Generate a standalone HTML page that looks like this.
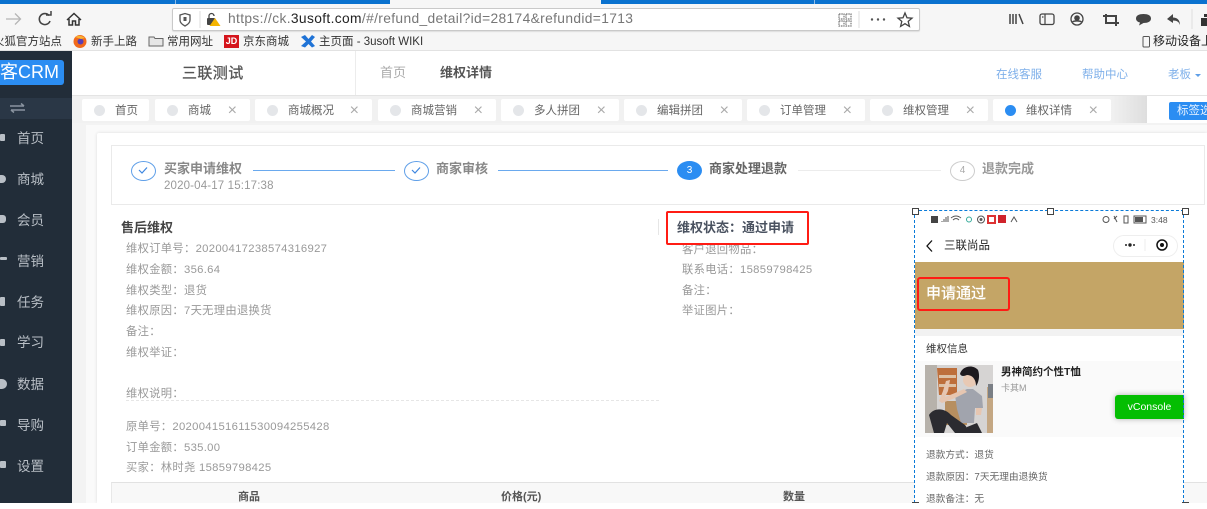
<!DOCTYPE html>
<html><head><meta charset="utf-8">
<style>
html,body{margin:0;padding:0;background:#fff}
#r{position:relative;width:1207px;height:509px;overflow:hidden;background:#fff;font-family:"Liberation Sans","Noto Sans CJK SC",sans-serif}
#r div,#r span.t{position:absolute;white-space:nowrap}
.g{color:#999;font-size:11.300px;line-height:14px;letter-spacing:.3px}
.tab{top:99px;height:22px;background:#fff;border-radius:2px}
.tab i{position:absolute;left:12px;top:6px;width:11px;height:11px;border-radius:50%;background:#e4e6e9}
.tab b{position:absolute;top:5px;font-weight:400;font-size:11.500px;line-height:15px;color:#666}
.tab u{position:absolute;top:4px;right:12px;text-decoration:none;color:#aaa;font-size:16px;line-height:15px}
.m{left:17px;color:#b9bfc6;font-size:13.500px;line-height:16px}
.ic{left:0;width:6px;height:8px;background:#b9bfc6;border-radius:1px}
.bk{font-size:11.500px;line-height:14px;color:#333}
.h{width:5px;height:5px;border:1px solid #444;background:#fff}
.st{font-size:13px;line-height:16px;font-weight:700}
</style></head><body><div id="r">

<!-- browser top -->
<div style="left:0;top:0;width:1207px;height:51px;background:#f6f6f6"></div>
<div style="left:0;top:0;width:390px;height:4px;background:#0a72cf"></div>
<div style="left:175px;top:0;width:1px;height:4px;background:#8fbce6"></div>
<div style="left:601px;top:0;width:606px;height:4px;background:#0a72cf"></div>
<div style="left:814px;top:0;width:1px;height:4px;background:#8fbce6"></div>
<svg style="position:absolute;left:0;top:8px" width="90" height="22" fill="none">
<path d="M6 11H20M15 5.500L20.500 11L15 16.500" stroke="#b5b5b5" stroke-width="1.300"/>
<path d="M49 7.500A5.500 5.500 0 1 0 50 13" stroke="#444" stroke-width="1.600"/><path d="M46 7H51V3" stroke="#444" stroke-width="1.500"/>
<path d="M67 12L74 5.500L81 12M69 11V17H72.500V13H75.500V17H79V11" stroke="#333" stroke-width="1.500"/>
</svg>
<div style="left:172px;top:8px;width:746px;height:21px;background:#fff;border:1px solid #c9c9c9;border-radius:2px;box-shadow:0 1px 1px #ddd"></div>
<svg style="position:absolute;left:176px;top:10px" width="50" height="20" fill="none">
<path d="M4 5L9 3.500L14 5V10C14 13 11 15 9 16C7 15 4 13 4 10Z" stroke="#555" stroke-width="1.300"/><rect x="7.500" y="7" width="3" height="4" fill="#555"/>
<path d="M24 1V18" stroke="#ddd"/>
<rect x="31" y="8" width="8" height="7" fill="#444" rx="1"/><path d="M33 8V6A2.500 2.500 0 0 1 38 6" stroke="#444" stroke-width="1.300"/>
<path d="M39 8L44.500 16H33.500Z" fill="#f5b400"/>
</svg>
<div style="left:228px;top:10px;font-size:13.800px;line-height:17px;letter-spacing:.35px;color:#777">https://ck.<span style="color:#222">3usoft.com</span>/#/refund_detail?id=28174&amp;refundid=1713</div>
<svg style="position:absolute;left:836px;top:10px" width="80" height="20" fill="none">
<path d="M3 4H8V9H3ZM10 4H15V9H10ZM3 11H8V16H3ZM10 11H15V16H10Z" stroke="#777" stroke-width="1.200" stroke-dasharray="1.500 .8"/>
<path d="M23 1V18" stroke="#ddd"/>
<circle cx="36" cy="9.500" r="1.200" fill="#555"/><circle cx="42" cy="9.500" r="1.200" fill="#555"/><circle cx="48" cy="9.500" r="1.200" fill="#555"/>
<path d="M69 3L71 7.800L76 8.200L72.200 11.400L73.400 16.400L69 13.700L64.600 16.400L65.800 11.400L62 8.200L67 7.800Z" stroke="#444" stroke-width="1.300"/>
</svg>
<svg style="position:absolute;left:1005px;top:9px" width="202" height="22" fill="none" stroke="#444">
<path d="M5 5V15M8 5V15M11 5V15M14 5L18 15" stroke-width="1.500"/>
<rect x="35" y="5" width="14" height="10.500" rx="2" stroke-width="1.300"/><path d="M40 5V15.500M37 8H38.500" stroke-width="1.200"/>
<circle cx="72" cy="10" r="6" stroke-width="1.300"/><circle cx="72" cy="9" r="2.300" fill="#444"/><path d="M67.500 13C69 11.500 75 11.500 76.500 13" stroke-width="1.500"/>
<path d="M101 5V14H114M98 7H111V17" stroke-width="2"/>
<path d="M131 9.500C131 6.500 134 5 138.500 5C143 5 146 6.500 146 9.500C146 12.500 143 14 138.500 14L134 16.500L135 13.500C132.500 13 131 11.500 131 9.500Z" fill="#444" stroke="none"/>
<path d="M168 5L162 10L168 14V11.500C172 11.500 174 13 175 16C175 11 172 8.500 168 8.500Z" fill="#444" stroke="none"/>
<path d="M187 0V20" stroke="#ddd"/><path d="M196 9H202V17H196ZM199 5H202V8H199Z" fill="#333" stroke="none"/>
</svg>
<!-- bookmarks -->
<div class="bk" style="left:0;top:35px;color:#333;width:62px;overflow:hidden;direction:rtl">火狐官方站点</div>
<svg style="position:absolute;left:73px;top:34px" width="15" height="15"><circle cx="7" cy="7.500" r="6.500" fill="#f26a1b"/><circle cx="7.500" cy="7.500" r="3" fill="#5a3fb5"/><path d="M2 3Q7 0 12 4L8 5Z" fill="#f9b233"/></svg>
<div class="bk" style="left:91px;top:35px">新手上路</div>
<svg style="position:absolute;left:148px;top:35px" width="16" height="13" fill="none"><path d="M1 11V2H6L7 3.500H15V11Z" stroke="#666" fill="#e6e6e6"/></svg>
<div class="bk" style="left:167px;top:35px">常用网址</div>
<div style="left:224px;top:35px;width:15px;height:13px;background:#d5141c;color:#fff;font-size:9px;font-weight:700;line-height:13px;text-align:center">JD</div>
<div class="bk" style="left:243px;top:35px">京东商城</div>
<svg style="position:absolute;left:301px;top:35px" width="15" height="13"><path d="M0 2L4 0L7.500 4L11 0L14 2L10 6.500L14 11L11 12.500L7.500 9L4 12.500L0 11L5 6.500Z" fill="#1f73d6"/></svg>
<div class="bk" style="left:319px;top:35px">主页面 - 3usoft WIKI</div>
<svg style="position:absolute;left:1142px;top:36px" width="9" height="12" fill="none"><rect x="1" y=".5" width="6.500" height="10.500" rx="1" stroke="#555"/></svg>
<div class="bk" style="left:1153px;top:34px;color:#222;font-size:12px">移动设备上</div>
<div style="left:0;top:50px;width:1207px;height:1px;background:#e2e2e2"></div>

<!-- sidebar -->
<div style="left:0;top:51px;width:72px;height:452px;background:#222d39"></div>
<div style="left:0;top:60px;width:64px;height:25px;background:#2b8df2;border-radius:0 3px 3px 0;color:#fff;font-size:18px;line-height:25px;overflow:hidden"><span style="position:absolute;right:5px;top:0">客CRM</span></div>
<div style="left:0;top:98px;width:72px;height:21px;background:#2a3746"></div>
<svg style="position:absolute;left:9px;top:102px" width="17" height="12" fill="none" stroke="#8a94a0" stroke-width="1.500"><path d="M1 4H15M12 1.500L15 4M16 8H2M5 10.500L2 8"/></svg>
<div class="ic" style="top:134px;width:5px;height:7px"></div><div class="m" style="top:131px">首页</div>
<div class="ic" style="top:175px;border-radius:0 5px 5px 0;height:8px"></div><div class="m" style="top:172px">商城</div>
<div class="ic" style="top:215px;height:8px;width:6px;border-radius:0 3px 3px 0"></div><div class="m" style="top:213px">会员</div>
<div class="ic" style="top:257px;height:3px;width:7px"></div><div class="m" style="top:254px">营销</div>
<div class="ic" style="top:297px;width:5px;height:9px"></div><div class="m" style="top:295px">任务</div>
<div class="ic" style="top:339px;width:5px;height:7px"></div><div class="m" style="top:335px">学习</div>
<div class="ic" style="top:379px;width:7px;height:10px;border-radius:0 5px 5px 0"></div><div class="m" style="top:377px">数据</div>
<div class="ic" style="top:420px;width:6px;height:6px"></div><div class="m" style="top:418px">导购</div>
<div class="ic" style="top:461px;width:6px;height:7px"></div><div class="m" style="top:459px">设置</div>

<!-- header -->
<div style="left:182px;top:65px;font-size:15px;line-height:18px;letter-spacing:.4px;color:#555;font-weight:400;-webkit-text-stroke:.3px #555">三联测试</div>
<div style="left:355px;top:51px;width:1px;height:44px;background:#ececec"></div>
<div style="left:380px;top:65px;font-size:13px;line-height:15px;color:#aaa">首页</div>
<div style="left:440px;top:65px;font-size:13px;line-height:15px;color:#555;font-weight:700">维权详情</div>
<div style="left:996px;top:68px;font-size:11.500px;line-height:15px;color:#7fb0ea">在线客服</div>
<div style="left:1082px;top:68px;font-size:11.500px;line-height:15px;color:#7fb0ea">帮助中心</div>
<div style="left:1168px;top:68px;font-size:11.500px;line-height:15px;color:#7fb0ea">老板</div>
<div style="left:1195px;top:74px;width:0;height:0;border:3px solid transparent;border-top:3px solid #5f9fe8"></div>

<!-- tabs -->
<div style="left:72px;top:95px;width:1135px;height:28px;background:#f1f1f1;border-top:1px solid #e4e4e4"></div>
<div style="left:1111px;top:96px;width:36px;height:27px;background:linear-gradient(90deg,#f1f1f1,#dedede)"></div>
<div style="left:1147px;top:96px;width:60px;height:27px;background:#fff"></div>
<div class="tab" style="left:82px;width:67px"><i></i><b style="left:33px">首页</b></div>
<div class="tab" style="left:155px;width:95px"><i></i><b style="left:33px">商城</b><u style="right:13px">×</u></div>
<div class="tab" style="left:255px;width:117px"><i></i><b style="left:33px">商城概况</b><u style="right:13px">×</u></div>
<div class="tab" style="left:378px;width:118px"><i></i><b style="left:33px">商城营销</b><u style="right:13px">×</u></div>
<div class="tab" style="left:501px;width:118px"><i></i><b style="left:33px">多人拼团</b><u style="right:13px">×</u></div>
<div class="tab" style="left:624px;width:118px"><i></i><b style="left:33px">编辑拼团</b><u style="right:13px">×</u></div>
<div class="tab" style="left:747px;width:118px"><i></i><b style="left:33px">订单管理</b><u style="right:13px">×</u></div>
<div class="tab" style="left:870px;width:118px"><i></i><b style="left:33px">维权管理</b><u style="right:13px">×</u></div>
<div class="tab" style="left:993px;width:118px"><i style="background:#2b8df2"></i><b style="left:33px">维权详情</b><u style="right:13px">×</u></div>
<div style="left:1169px;top:102px;width:38px;height:18px;background:#2b8df2;border-radius:2px 0 0 2px;color:#e8f2ff;font-size:11.500px;line-height:18px;padding-left:8px;box-sizing:border-box;overflow:hidden">标签选</div>

<!-- content bg -->
<div style="left:72px;top:123px;width:1135px;height:380px;background:#f3f3f3"></div>
<div style="left:86px;top:125px;width:1121px;height:378px;background:#fafafa"></div>
<div style="left:97px;top:133px;width:1110px;height:370px;background:#fff;box-shadow:0 0 3px #ddd;border-radius:2px 0 0 0"></div>

<!-- steps -->
<div style="left:111px;top:145px;width:1092px;height:58px;border:1px solid #eaeaea"></div>
<div style="left:131px;top:161px;width:23px;height:18px;border:1px solid #5f9fe8;border-radius:50%"></div>
<svg style="position:absolute;left:137px;top:165px" width="13" height="10" fill="none"><path d="M2 5L5 8L10 2.500" stroke="#3d86e0" stroke-width="1.200"/></svg>
<div class="st" style="left:164px;top:161px;color:#888">买家申请维权</div>
<div style="left:164px;top:179px;font-size:11.500px;line-height:14px;color:#999;letter-spacing:.15px">2020-04-17 15:17:38</div>
<div style="left:253px;top:170px;width:142px;height:1px;background:#6aa9ee"></div>
<div style="left:404px;top:161px;width:23px;height:18px;border:1px solid #5f9fe8;border-radius:50%"></div>
<svg style="position:absolute;left:410px;top:165px" width="13" height="10" fill="none"><path d="M2 5L5 8L10 2.500" stroke="#3d86e0" stroke-width="1.200"/></svg>
<div class="st" style="left:436px;top:161px;color:#888">商家审核</div>
<div style="left:498px;top:170px;width:170px;height:1px;background:#6aa9ee"></div>
<div style="left:677px;top:161px;width:25px;height:19px;background:#2b8df2;border-radius:50%;color:#fff;font-size:10px;line-height:19px;text-align:center">3</div>
<div class="st" style="left:709px;top:161px;color:#666">商家处理退款</div>
<div style="left:798px;top:170px;width:143px;height:1px;background:#ececec"></div>
<div style="left:950px;top:161px;width:23px;height:18px;border:1px solid #ccc;border-radius:50%;color:#aaa;font-size:10px;line-height:18px;text-align:center">4</div>
<div class="st" style="left:982px;top:161px;color:#999">退款完成</div>

<!-- left details -->
<div class="st" style="left:121px;top:220px;color:#444">售后维权</div>
<div class="g" style="left:126px;top:242px">维权订单号：20200417238574316927</div>
<div class="g" style="left:126px;top:263px">维权金额：356.64</div>
<div class="g" style="left:126px;top:284px">维权类型：退货</div>
<div class="g" style="left:126px;top:304px">维权原因：7天无理由退换货</div>
<div class="g" style="left:126px;top:325px">备注：</div>
<div class="g" style="left:126px;top:346px">维权举证：</div>
<div class="g" style="left:126px;top:387px">维权说明：</div>
<div style="left:126px;top:400px;width:533px;height:0;border-top:1px dashed #e6e6e6"></div>
<div class="g" style="left:126px;top:420px">原单号：202004151611530094255428</div>
<div class="g" style="left:126px;top:441px">订单金额：535.00</div>
<div class="g" style="left:126px;top:461px">买家：林时尧 15859798425</div>

<!-- right details -->
<div style="left:658px;top:219px;width:1px;height:16px;background:#e6e6e6"></div>
<div class="g" style="left:682px;top:243px">客户退回物品：</div>
<div style="left:666px;top:211px;width:143px;height:34px;background:#fff;border:2px solid #ff1c14;border-radius:2px;box-sizing:border-box"></div>
<div class="st" style="left:677px;top:220px;color:#4a5260">维权状态：通过申请</div>
<div class="g" style="left:682px;top:263px">联系电话：15859798425</div>
<div class="g" style="left:682px;top:284px">备注：</div>
<div class="g" style="left:682px;top:304px">举证图片：</div>

<!-- table -->
<div style="left:111px;top:482px;width:1096px;height:21px;background:#f8f8f8;border-top:1px solid #e2e2e2;border-left:1px solid #e8e8e8;box-sizing:border-box"></div>
<div style="left:238px;top:490px;font-size:11px;line-height:14px;color:#555;font-weight:700">商品</div>
<div style="left:501px;top:490px;font-size:11px;line-height:14px;color:#555;font-weight:700">价格(元)</div>
<div style="left:783px;top:490px;font-size:11px;line-height:14px;color:#555;font-weight:700">数量</div>

<!-- phone -->
<div style="left:915px;top:210px;width:269px;height:293px;background:#fff"></div>
<div style="left:915px;top:262px;width:269px;height:67px;background:#c4a566"></div>
<div style="left:915px;top:329px;width:269px;height:7px;background:#f2f2f2"></div>
<div style="left:915px;top:361px;width:269px;height:76px;background:#fafafa"></div>
<svg style="position:absolute;left:929px;top:214px" width="255" height="12" fill="none">
<rect x="2" y="2" width="7" height="7" fill="#444"/><path d="M13 8V7M15 8V5M17 8V3M19 8V2" stroke="#555"/>
<path d="M22 4Q27 0 32 4M24 6Q27 3 30 6" stroke="#555"/><circle cx="40" cy="5.500" r="2.500" stroke="#3a9"/><circle cx="52" cy="5.500" r="3.500" stroke="#555"/><circle cx="52" cy="5.500" r="1.500" fill="#555"/>
<rect x="59" y="2" width="7" height="7" stroke="#d33" stroke-width="2"/><rect x="69" y="1" width="8" height="8" fill="#d0232b"/>
<path d="M82 8L85 3L88 8" stroke="#555"/>
<circle cx="177" cy="5.500" r="3" stroke="#555"/><path d="M185 2L188 8M188 2L185 5" stroke="#555"/>
<rect x="195" y="2" width="4" height="7" stroke="#555"/>
<rect x="205" y="2" width="12" height="7" stroke="#555"/><rect x="206" y="3" width="8" height="5" fill="#555"/>
</svg>
<div style="left:1151px;top:214px;font-size:8.500px;line-height:12px;color:#555">3:48</div>
<svg style="position:absolute;left:924px;top:239px" width="12" height="14" fill="none"><path d="M8 1.500L3 7L8 12.500" stroke="#111" stroke-width="1.300"/></svg>
<div style="left:944px;top:238px;font-size:11.500px;line-height:16px;color:#222">三联尚品</div>
<div style="left:1113px;top:235px;width:63px;height:20px;border:1px solid #eee;border-radius:11px;background:#fff"></div>
<svg style="position:absolute;left:1122px;top:238px" width="50" height="16" fill="none"><circle cx="4" cy="7" r="1" fill="#222"/><circle cx="8" cy="7" r="1.700" fill="#222"/><circle cx="12" cy="7" r="1" fill="#222"/><path d="M23 1V13" stroke="#eee"/><circle cx="40" cy="7" r="5" stroke="#111" stroke-width="1.500"/><circle cx="40" cy="7" r="2" fill="#111"/></svg>
<div style="left:917px;top:277px;width:93px;height:34px;border:2px solid #ff1c14;border-radius:3px;box-sizing:border-box"></div>
<div style="left:926px;top:284px;font-size:15px;line-height:20px;color:#fff;-webkit-text-stroke:.3px #fff">申请通过</div>
<div style="left:926px;top:342px;font-size:10.500px;line-height:15px;color:#333">维权信息</div>
<!-- product picture -->
<svg style="position:absolute;left:925px;top:365px" width="68" height="68" viewBox="0 0 68 68">
<rect width="68" height="68" fill="#d6d4d3"/>
<rect x="0" y="0" width="12" height="68" fill="#b7b2ab"/>
<path d="M12 3H32V30H14Z" fill="#bd6f3c"/><path d="M14 10H31V13H14ZM14 19H31V22H14Z" fill="#dcc1a6"/>
<rect x="62" y="22" width="6" height="46" fill="#c4a783"/><rect x="63" y="19" width="5" height="14" fill="#7a7f85"/>
<rect x="20" y="36" width="22" height="24" fill="#b78f60"/>
<path d="M30 30L42 24L48 24L57 31L58 43L50 43L49 58L36 58L32 44Z" fill="#a1a4ad"/>
<path d="M42 27L30 33L17 38L14 36L18 26L21 16L25 15L23 26L20 32L30 28L39 24Z" fill="#e6c6b1"/>
<path d="M51 43H57L56 50H51Z" fill="#e6c6b1"/>
<circle cx="45" cy="15" r="7" fill="#e8c9b4"/><path d="M35 9C37 1 48 -1 53 5C55 10 54 17 51 21C51 14 47 10 42 10C39 11 37 12 35 9Z" fill="#1d1a1e"/>
<path d="M4 50C9 42 20 43 26 50L40 60L46 68H30L22 58L19 68H9Z" fill="#2b2b30"/>
<path d="M42 62L52 58L57 68H42Z" fill="#2b2b30"/>
</svg>
<div style="left:1001px;top:365px;font-size:10.500px;line-height:15px;color:#222;font-weight:700">男神简约个性T恤</div>
<div style="left:1001px;top:381px;font-size:9px;line-height:14px;color:#999">卡其M</div>
<div style="left:1115px;top:395px;width:69px;height:24px;background:#04be02;border-radius:3px 0 0 3px;box-shadow:0 0 6px rgba(0,0,0,.3);color:#fff;font-size:10.500px;line-height:25px;text-align:center">vConsole</div>
<div style="left:926px;top:448px;font-size:9.700px;line-height:15px;color:#666">退款方式：退货</div>
<div style="left:926px;top:470px;font-size:9.700px;line-height:15px;color:#666">退款原因：7天无理由退换货</div>
<div style="left:926px;top:492px;font-size:9.700px;line-height:15px;color:#666">退款备注：无</div>
<!-- dashed selection -->
<div style="left:914px;top:210px;width:270px;height:293px;border:1px dashed #0a7ad8;border-bottom:0;box-sizing:border-box"></div>
<div class="h" style="left:912px;top:208px"></div>
<div class="h" style="left:1047px;top:208px"></div>
<div class="h" style="left:1182px;top:208px"></div>
<div class="h" style="left:912px;top:502px;height:1px;border-bottom:0"></div>
<div class="h" style="left:1182px;top:502px;height:1px;border-bottom:0"></div>
<!-- bottom strip -->
<div style="left:0;top:503px;width:1207px;height:6px;background:#fff"></div>
</div></body></html>
